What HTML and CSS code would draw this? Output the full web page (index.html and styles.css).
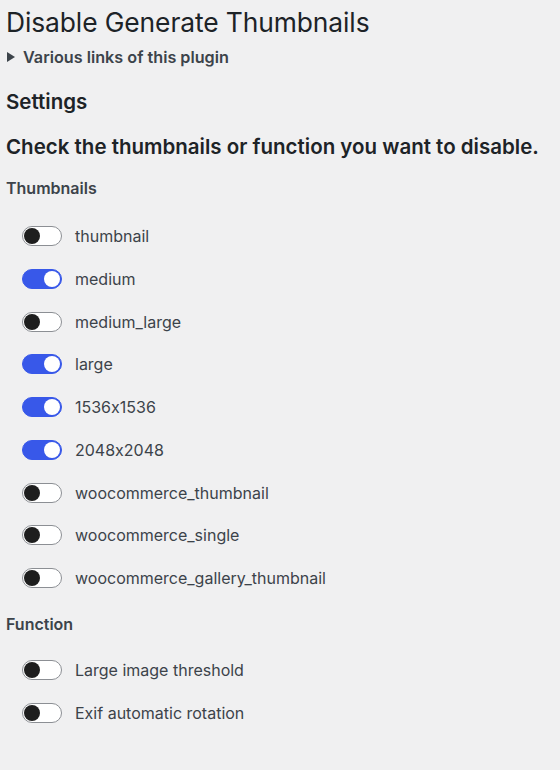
FILE: index.html
```html
<!DOCTYPE html>
<html lang="en">
<head>
  <meta charset="UTF-8" />
  <title>Disable Generate Thumbnails</title>
  <link rel="stylesheet" href="styles.css">
</head>
<body>
  <div class="wrap">
    <h1>Disable Generate Thumbnails</h1>

    <details class="links">
      <summary>Various links of this plugin</summary>
    </details>

    <h2>Settings</h2>
    <h3>Check the thumbnails or function you want to disable.</h3>

    <div class="group-title">Thumbnails</div>
    <div class="toggle-list">
      <label class="row"><span class="toggle"></span><span>thumbnail</span></label>
      <label class="row"><span class="toggle on"></span><span>medium</span></label>
      <label class="row"><span class="toggle"></span><span>medium_large</span></label>
      <label class="row"><span class="toggle on"></span><span>large</span></label>
      <label class="row"><span class="toggle on"></span><span>1536x1536</span></label>
      <label class="row"><span class="toggle on"></span><span>2048x2048</span></label>
      <label class="row"><span class="toggle"></span><span>woocommerce_thumbnail</span></label>
      <label class="row"><span class="toggle"></span><span>woocommerce_single</span></label>
      <label class="row"><span class="toggle"></span><span>woocommerce_gallery_thumbnail</span></label>
    </div>

    <div class="group-title">Function</div>
    <div class="toggle-list short">
      <label class="row"><span class="toggle"></span><span>Large image threshold</span></label>
      <label class="row"><span class="toggle"></span><span>Exif automatic rotation</span></label>
    </div>
  </div>
</body>
</html>
```

FILE: styles.css
```css
html, body {
  margin: 0;
  padding: 0;
  background: #f0f0f1;
  color: #1d2327;
  font-family: Inter, "Noto Sans", sans-serif;
  font-feature-settings: "calt" 0;
}

.wrap {
  padding: 0 6px;
}

h1 {
  margin: 0;
  padding-top: 7px;
  font-size: 26.4px;
  font-weight: 400;
  line-height: 30px;
  letter-spacing: -0.1px;
}

.links summary {
  display: flex;
  align-items: center;
  gap: 8px;
  margin-top: 10px;
  padding-left: 1px;
  list-style: none;
  font-size: 16.2px;
  font-weight: 600;
  color: #3c434a;
  line-height: 20px;
  cursor: pointer;
}

.links summary::-webkit-details-marker {
  display: none;
}

.links summary::before {
  content: "";
  border-left: 8px solid #3c434a;
  border-top: 5px solid transparent;
  border-bottom: 5px solid transparent;
}

h2 {
  margin: 22px 0 0;
  font-size: 20.5px;
  font-weight: 600;
  line-height: 26px;
}

h3 {
  margin: 19px 0 0;
  font-size: 20.5px;
  font-weight: 600;
  line-height: 26px;
}

.group-title {
  margin-top: 18px;
  font-size: 16px;
  font-weight: 600;
  color: #3c434a;
  line-height: 20px;
}

.toggle-list {
  padding: 28px 0 8px 16px;
  display: flex;
  flex-direction: column;
  gap: 22.75px;
}

.toggle-list.short {
  padding-top: 26px;
}

.row {
  display: flex;
  align-items: center;
  gap: 13px;
  font-size: 16px;
  color: #3c434a;
  line-height: 20px;
}

.toggle {
  position: relative;
  box-sizing: border-box;
  width: 40px;
  height: 20px;
  border: 1px solid #8c8f94;
  border-radius: 10px;
  background: #fff;
  flex: none;
}

.toggle::after {
  content: "";
  position: absolute;
  top: 1px;
  left: 1px;
  width: 16px;
  height: 16px;
  border-radius: 50%;
  background: #1e1e1e;
}

.toggle.on {
  background: #3858e9;
  border-color: #3858e9;
}

.toggle.on::after {
  left: auto;
  right: 1px;
  background: #fff;
}
```
